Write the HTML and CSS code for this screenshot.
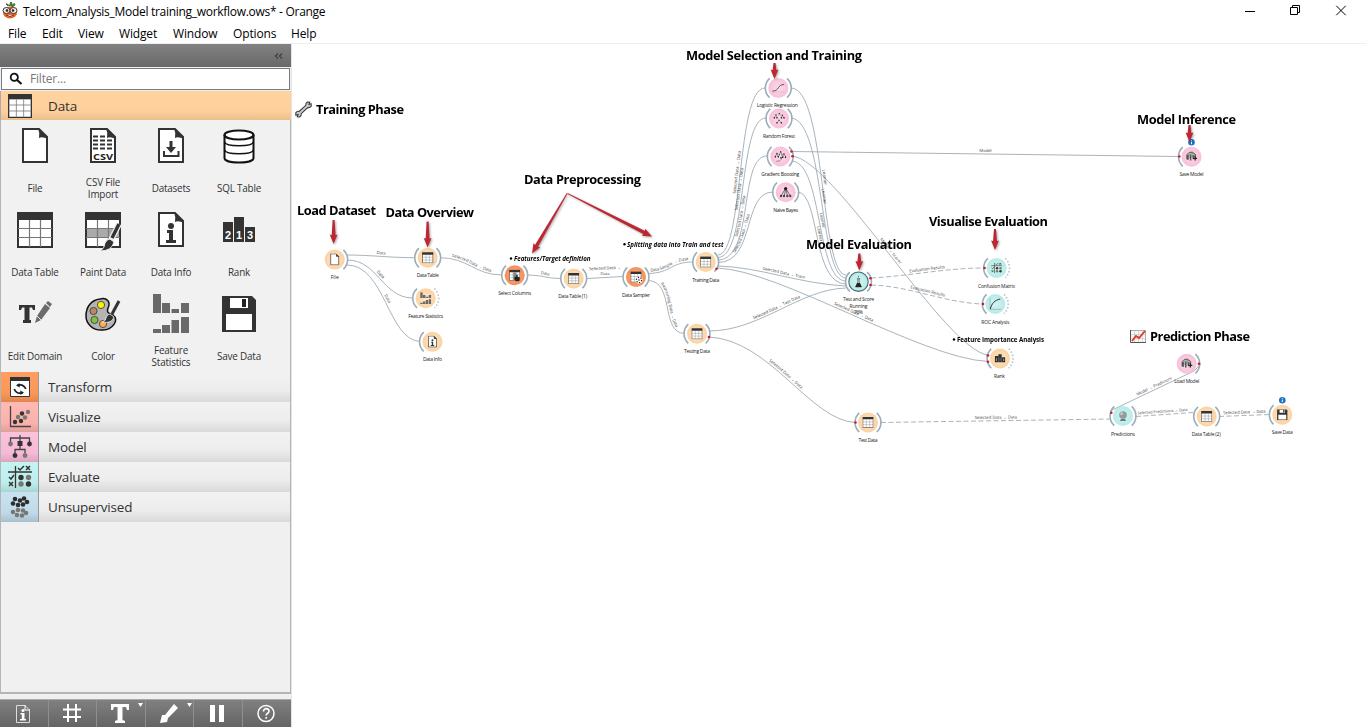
FILE: index.html
```html
<!DOCTYPE html>
<html lang="en">
<head>
<meta charset="utf-8">
<title>Telcom_Analysis_Model training_workflow.ows* - Orange</title>
<link rel="stylesheet" href="styles.css">
</head>
<body>
<svg class="defs" width="0" height="0">
  <defs>
    <symbol id="i-file" viewBox="0 0 36 36"><path d="M6 1H22L30 9V34H6Z" fill="#fff" stroke="#333" stroke-width="2"/><path d="M21 0L31 9V11Q25 8 22 10Q23 5 21 0Z" fill="#333"/></symbol>
    <symbol id="i-csv" viewBox="0 0 36 36"><use href="#i-file"/><path d="M8 8.500H20M8 12.500H27M8 16.500H27M8 20.500H27" stroke="#333" stroke-width="2" stroke-dasharray="5 2"/><text x="18" y="32" class="csv" textLength="20" lengthAdjust="spacingAndGlyphs">CSV</text></symbol>
    <symbol id="i-datasets" viewBox="0 0 36 36"><use href="#i-file"/><path d="M16.500 13H19.500V19H23L18 25L13 19H16.500Z" fill="#333"/><path d="M11 23V28H25.500V23" fill="none" stroke="#333" stroke-width="2"/></symbol>
    <symbol id="i-info" viewBox="0 0 36 36"><use href="#i-file"/><circle cx="18" cy="14" r="3" fill="#333"/><path d="M14 18H20V28H23V31H13V28H16V21H14Z" fill="#333"/></symbol>
    <symbol id="i-sql" viewBox="0 0 36 36"><path d="M3.500 7V30C3.500 36 32.500 36 32.500 30V7" fill="#fff" stroke="#111" stroke-width="2"/><ellipse cx="18" cy="7" rx="14.500" ry="4.500" fill="#fff" stroke="#111" stroke-width="2.200"/><path d="M3.500 14C5 19 31 19 32.500 14M3.500 22C5 27 31 27 32.500 22" fill="none" stroke="#111" stroke-width="1.500"/></symbol>
    <symbol id="i-table" viewBox="0 0 36 36"><path d="M1 1H35V35H1Z" fill="#fff" stroke="#333" stroke-width="2"/><path d="M0 0H36V8H0Z" fill="#333"/><path d="M12.500 8V35M23.500 8V35M1 16.500H35M1 25.500H35" stroke="#777" stroke-width="1.200"/></symbol>
    <symbol id="i-paint" viewBox="0 0 36 40"><path d="M1 1H35V35H1Z" fill="#fff" stroke="#333" stroke-width="2"/><path d="M0 0H36V8H0Z" fill="#333"/><path d="M2 17H34V25H2Z" fill="#aaa"/><path d="M12.500 8V35M23.500 8V35M1 16.500H35M1 25.500H35" stroke="#777" stroke-width="1.200"/><path d="M34 12L26 28" stroke="#f1f1f1" stroke-width="6"/><path d="M34 12L27 26" stroke="#333" stroke-width="3.500"/><path d="M25 27L29 30Q27 39 15 39Q20 36 20 31Q22 27 25 27Z" fill="#333" stroke="#f1f1f1" stroke-width="1"/></symbol>
    <symbol id="i-rank" viewBox="0 0 36 36"><path d="M2 10H12V30H2ZM13 5H23V30H13ZM24 15H34V30H24Z" fill="#333"/><text class="rank" x="7" y="27">2</text><text class="rank" x="18" y="27">1</text><text class="rank" x="29" y="27">3</text></symbol>
    <symbol id="i-bars" viewBox="0 0 36 36"><path d="M1 10H12V30H1ZM12.500 4H23.500V30H12.500ZM24 14H35V30H24Z" fill="#333"/><path d="M5 17H8V26H5ZM17 17H19V26H17ZM28 19H31V26H28Z" fill="#999"/></symbol>
    <symbol id="i-edit" viewBox="0 0 36 36"><path d="M2 9H18V14H16L15 11.500H12.500V24H14V27H6V24H7.500V11.500H5L4 14H2Z" fill="#333"/><path d="M18 27L20 20L28 8L33 12L24 24Z" fill="#6b6b6b"/><path d="M29 7L31 5L35 8L33 11Z" fill="#6b6b6b"/><path d="M20 20L24 24" stroke="#f1f1f1"/></symbol>
    <symbol id="i-color" viewBox="0 0 36 36"><path d="M15 3C22 1 26 6 23 12C21 17 25 18 28 19C35 24 27 34 18 34C7 35 1 27 1 20C1 11 6 4 15 3Z" fill="#b4b4b4" stroke="#111" stroke-width="1.500"/><g stroke="#333" stroke-width=".8"><circle cx="16" cy="9" r="3.600" fill="#ffef00"/><circle cx="8.500" cy="15" r="3.600" fill="#b98960"/><circle cx="9.500" cy="24" r="3.600" fill="#7fc241"/><circle cx="18" cy="28" r="3.600" fill="#ffae4f"/></g><path d="M34 5L27 18" stroke="#333" stroke-width="3"/><path d="M25 18L29 21Q27 28 17 26Q21 25 21 22Q22 18 25 18Z" fill="#333" stroke="#f1f1f1" stroke-width=".8"/></symbol>
    <symbol id="i-stats" viewBox="0 0 36 40"><path d="M0 0H8V19H0ZM9 9H17V19H9ZM18.500 15H26V19H18.500ZM28 9H36V19H28ZM0 35H8V39H0ZM9 31H17V39H9ZM18.500 26H26V39H18.500ZM28 23H36V39H28Z" fill="#696969"/></symbol>
    <symbol id="i-save" viewBox="0 0 36 36"><path d="M1 0H31L35 4V36H1Z" fill="#333"/><path d="M9 2H27V12H9ZM5 18H31V34H5Z" fill="#fff"/><path d="M21 3H25V11H21Z" fill="#222"/></symbol>
    <symbol id="i-transform" viewBox="0 0 20 20"><path d="M.5.500H19.500V19.500H.500Z" fill="#fff" stroke="#333"/><path d="M0 0H20V4H0Z" fill="#333"/><path d="M7.500 8.200Q13.500 6.500 15.800 12M12.500 15.800Q6.500 17.500 4.200 12" fill="none" stroke="#222" stroke-width="1.800"/><path d="M9.500 6L6 8.500L9.800 10.500ZM10.500 18L14 15.500L10.200 13.500Z" fill="#222"/></symbol>
    <symbol id="i-scatter" viewBox="0 0 22 22"><path d="M1.500 0V20.500H22" fill="none" stroke="#444" stroke-width="1.300"/><g fill="#333"><circle cx="6" cy="16" r="2.200"/><circle cx="12" cy="15" r="2.200"/><circle cx="13" cy="7.500" r="2.200"/></g><g fill="#777"><circle cx="9" cy="11" r="2.200"/><circle cx="16" cy="11.500" r="2.200"/><circle cx="19" cy="6" r="2.200"/></g></symbol>
    <symbol id="i-tree" viewBox="0 0 24 24"><path d="M2.500 7V3H21.500V7M12 0V15M7 18V14.500H17V18" fill="none" stroke="#444" stroke-width="1.300"/><path d="M9.500 6H14.500V11H9.500Z" fill="#333"/><circle cx="2.500" cy="9" r="2.400" fill="#777"/><circle cx="21.500" cy="9" r="2.400" fill="#333"/><circle cx="7" cy="20.500" r="2.400" fill="#333"/><circle cx="17" cy="20.500" r="2.400" fill="#777"/></symbol>
    <symbol id="i-eval" viewBox="0 0 24 24"><path d="M7.500 1V23M0 7H24" stroke="#333" stroke-width="1.300"/><path d="M10 3L12 5L16 1M18 1L22 5M22 1L18 5M1 12L3 14L6 10M1 17L5 21M5 17L1 21" fill="none" stroke="#333" stroke-width="1.500"/><g fill="#333"><circle cx="13" cy="12.500" r="2.700"/><circle cx="20.500" cy="19" r="2.700"/></g><g fill="#777"><circle cx="20.500" cy="12.500" r="2.700"/><circle cx="13" cy="19" r="2.700"/></g></symbol>
    <symbol id="i-unsup" viewBox="0 0 20 22"><g fill="#777"><circle cx="3" cy="16" r="2.300"/><circle cx="8" cy="14" r="2.300"/><circle cx="13" cy="14.500" r="2.300"/><circle cx="16" cy="17" r="2.300"/><circle cx="7" cy="19" r="2.300"/><circle cx="12" cy="19.500" r="2.300"/></g><g fill="#2d2d2d"><circle cx="5" cy="3" r="2.300"/><circle cx="10" cy="4.500" r="2.300"/><circle cx="14" cy="2.500" r="2.300"/><circle cx="3" cy="7.500" r="2.300"/><circle cx="8" cy="9" r="2.300"/><circle cx="13" cy="8.500" r="2.300"/><circle cx="17" cy="6" r="2.300"/></g></symbol>
    <symbol id="i-logistic" viewBox="0 0 36 26"><path d="M1 22C22 22 14 3 35 3" fill="none" stroke="#444" stroke-width="2.500"/><path d="M0 25H35" stroke="#999"/></symbol>
    <symbol id="i-forest" viewBox="0 0 36 36"><path d="M4 15L9 7L12 15M16 9L19 2L23 9M25 16L28 8L33 16M12 31L18 23L25 31" fill="none" stroke="#666" stroke-width="1.500"/><g fill="#222"><circle cx="4" cy="16" r="2.400"/><circle cx="12" cy="16" r="2.400"/><circle cx="9" cy="7" r="2"/><circle cx="19" cy="2.500" r="2"/><circle cx="25" cy="16" r="2.400"/><circle cx="33" cy="16" r="2.400"/><circle cx="28" cy="8" r="2"/><circle cx="12" cy="31" r="2.400"/><circle cx="25" cy="31" r="2.400"/><circle cx="18" cy="23" r="2"/></g></symbol>
    <symbol id="i-boost" viewBox="0 0 36 36"><path d="M3 18L8 9L12 18M15 12L19 3L23 12M25 19L29 10L34 19M6 32Q20 34 22 22" fill="none" stroke="#555" stroke-width="1.800"/><g fill="#222"><circle cx="3" cy="19" r="2.500"/><circle cx="12" cy="19" r="2.500"/><circle cx="8" cy="9" r="2"/><circle cx="19" cy="4" r="2"/><circle cx="15" cy="13" r="2"/><circle cx="23" cy="13" r="2"/><circle cx="25" cy="20" r="2.500"/><circle cx="34" cy="20" r="2.500"/><circle cx="29" cy="10" r="2"/><circle cx="20" cy="22" r="2.500"/></g></symbol>
    <symbol id="i-bayes" viewBox="0 0 36 36"><path d="M18 6L4 29M18 6L14 29M18 6L23 29M18 6L32 29" stroke="#333" stroke-width="2"/><circle cx="18" cy="7" r="5" fill="#222"/><g fill="#444"><circle cx="4" cy="29" r="3.500"/><circle cx="13" cy="29" r="3.500"/><circle cx="23" cy="29" r="3.500"/><circle cx="32" cy="29" r="3.500"/></g></symbol>
    <symbol id="i-flask" viewBox="0 0 36 36"><path d="M18 0V5" stroke="#333" stroke-width="2"/><path d="M13 9H23M16 9V19L9 34H27L20 19V9" fill="none" stroke="#444" stroke-width="2"/><path d="M14 22H22L27 34H9Z" fill="#222"/></symbol>
    <symbol id="i-roc" viewBox="0 0 36 36"><path d="M2 0V34H36" fill="none" stroke="#789" stroke-width="1.500"/><path d="M3 33C7 16 17 6 33 3" fill="none" stroke="#333" stroke-width="3"/></symbol>
    <symbol id="i-model" viewBox="0 0 36 36"><path d="M4 27V13L13 6H21L30 13V20" fill="#888" stroke="#333" stroke-width="2"/><path d="M4 14H10V29H4ZM13 15H18V31H13ZM21 15H25V27H21Z" fill="#555"/><path d="M5 13L14 10L28 14M11 14V29M19 15V30" fill="none" stroke="#e9e9e9" stroke-width="1.600"/><path d="M29 18V31M23 24.500H35" stroke="#222" stroke-width="4"/></symbol>
    <symbol id="i-ball" viewBox="0 0 36 36"><path d="M12 26H24L27 33H9Z" fill="#777"/><circle cx="18" cy="15" r="11.500" fill="#929a9b"/><circle cx="14" cy="11" r="5" fill="#bcc5c6"/></symbol>
    <path id="br" d="M8.700-9.600A13 13 0 0 1 8.700 9.600" class="bracket"/>
    <path id="bl" d="M-8.700-9.600A13 13 0 0 0-8.700 9.600" class="bracket"/>
    <path id="brd" d="M8.700-9.600A13 13 0 0 1 8.700 9.600" class="bracket dotted"/>
    <g id="info"><circle r="3.300" fill="#1b74c4"/><path d="M0-2V-1M0-.4V2" stroke="#fff" stroke-width="1"/></g>
    <path id="head" d="M-3.900-9.500L0 0L3.900-9.500L1.300-8.800H-1.300Z"/>
    <radialGradient id="g-data"><stop offset="0" stop-color="#fde7cd"/><stop offset="1" stop-color="#fbd2a1"/></radialGradient>
    <radialGradient id="g-trans"><stop offset="0" stop-color="#f9b48c"/><stop offset="1" stop-color="#f58d55"/></radialGradient>
    <radialGradient id="g-model"><stop offset="0" stop-color="#fcdce9"/><stop offset="1" stop-color="#f8bfd8"/></radialGradient>
    <radialGradient id="g-eval"><stop offset="0" stop-color="#d3f4f1"/><stop offset="1" stop-color="#b5ebe7"/></radialGradient>
  </defs>
</svg>

<header class="titlebar">
  <svg class="logo" viewBox="0 0 16 17"><path d="M8 4Q4 1 4 2L6 4M8 4Q8 0 9 0L10 1L9 4Q12 1 13 2Q13 4 10 5" fill="#3f8f3c" stroke="#39713a"/><ellipse cx="8" cy="10.500" rx="7" ry="6" fill="#e5652d"/><ellipse cx="4.500" cy="8.500" rx="3.500" ry="3" fill="#eee" stroke="#5a2d1f"/><ellipse cx="11.500" cy="8.500" rx="3.500" ry="3" fill="#eee" stroke="#5a2d1f"/><circle cx="5" cy="8.500" r="1.300" fill="#222"/><circle cx="11" cy="8.500" r="1.300" fill="#222"/><path d="M4 13Q8 16 12 13" fill="#fff" stroke="#802d17"/></svg>
  <span class="title">Telcom_Analysis_Model training_workflow.ows* - Orange</span>
  <svg class="controls" viewBox="0 0 120 24" fill="none" stroke="#000"><path d="M5 11.500H15"/><path d="M50.500 7.500H57.500V14.500H50.500ZM52.500 7.500V5.500H59.500V12.500H57.500"/><path d="M96.300 5.800L105.700 15.200M105.700 5.800L96.300 15.200"/></svg>
</header>
<nav class="menubar"><span class="m-file">File</span><span class="m-edit">Edit</span><span class="m-view">View</span><span class="m-widget">Widget</span><span class="m-window">Window</span><span class="m-options">Options</span><span>Help</span></nav>

<main class="body">
  <aside class="dock">
    <div class="dock-head"><svg width="9" height="8" viewBox="0 0 9 8" fill="none" stroke="#3c3c3c" stroke-width="1.200"><path d="M4 1.500L1.500 4L4 6.500M8 1.500L5.500 4L8 6.500"/></svg></div>
    <div class="filter"><svg width="14" height="14" viewBox="0 0 14 14" fill="none" stroke="#111"><circle cx="5.300" cy="5.300" r="3.600" stroke-width="1.800"/><path d="M8 8L12.500 12" stroke-width="2.200"/></svg><span>Filter...</span></div>
    <div class="tab-data"><svg width="24" height="24"><use href="#i-table"/></svg><span>Data</span></div>
    <div class="widgets">
      <div class="widget"><svg class="ico"><use href="#i-file"/></svg><p>File</p></div>
      <div class="widget"><svg class="ico"><use href="#i-csv"/></svg><p>CSV File<br>Import</p></div>
      <div class="widget"><svg class="ico"><use href="#i-datasets"/></svg><p>Datasets</p></div>
      <div class="widget"><svg class="ico"><use href="#i-sql"/></svg><p>SQL Table</p></div>
      <div class="widget"><svg class="ico"><use href="#i-table"/></svg><p>Data Table</p></div>
      <div class="widget"><svg class="ico tall"><use href="#i-paint"/></svg><p>Paint Data</p></div>
      <div class="widget"><svg class="ico"><use href="#i-info"/></svg><p>Data Info</p></div>
      <div class="widget"><svg class="ico"><use href="#i-rank"/></svg><p>Rank</p></div>
      <div class="widget"><svg class="ico"><use href="#i-edit"/></svg><p>Edit Domain</p></div>
      <div class="widget"><svg class="ico"><use href="#i-color"/></svg><p>Color</p></div>
      <div class="widget"><svg class="ico tall up"><use href="#i-stats"/></svg><p>Feature<br>Statistics</p></div>
      <div class="widget"><svg class="ico"><use href="#i-save"/></svg><p>Save Data</p></div>
    </div>
    <div class="tab"><i class="transform"><svg width="20" height="20"><use href="#i-transform"/></svg></i><span>Transform</span></div>
    <div class="tab"><i class="visualize"><svg width="22" height="22"><use href="#i-scatter"/></svg></i><span>Visualize</span></div>
    <div class="tab"><i class="model"><svg width="24" height="24"><use href="#i-tree"/></svg></i><span>Model</span></div>
    <div class="tab"><i class="evaluate"><svg width="24" height="24"><use href="#i-eval"/></svg></i><span>Evaluate</span></div>
    <div class="tab"><i class="unsup"><svg width="20" height="22"><use href="#i-unsup"/></svg></i><span>Unsupervised</span></div>
    <div class="space"></div>
    <div class="tools">
      <div><svg viewBox="0 0 48 27"><path d="M17.500 5.500H26L30.500 10V22.500H17.500Z" fill="none" stroke="#ddd"/><path d="M26 5V10H31" fill="none" stroke="#fff"/><circle cx="24" cy="10.500" r="1.600" fill="#fff"/><path d="M21.500 13H25.500V19H27V20.500H21V19H22.800V14.500H21.500Z" fill="#fff"/></svg></div>
      <div><svg viewBox="0 0 48 27"><path d="M20 4V22M28 4V22M15 9.500H33M15 17H33" stroke="#fff" stroke-width="2"/></svg></div>
      <div><svg viewBox="0 0 48 27"><path d="M15 4H33V10H31L30 7H26.500V20L29 21V23H19V21L21.500 20V7H18L17 10H15Z" fill="#fff"/><path d="M42 3H47L44.500 7Z" fill="#fff"/></svg></div>
      <div><svg viewBox="0 0 48 27"><path d="M29 4L33 8L23 18L22 22L15 23L17 15L20 15Z" fill="#fff"/><path d="M42 3H47L44.500 7Z" fill="#fff"/></svg></div>
      <div><svg viewBox="0 0 48 27"><path d="M17 5H22V22H17ZM26 5H31V22H26Z" fill="#fff"/></svg></div>
      <div><svg viewBox="0 0 48 27"><circle cx="24" cy="13.500" r="8" fill="none" stroke="#fff" stroke-width="1.500"/><path d="M21.500 11.500C21.500 7.500 27 8 27 11.200C27 13.500 24.200 13 24.200 15.500M24.200 17V18.800" fill="none" stroke="#fff" stroke-width="1.600"/></svg></div>
    </div>
  </aside>

  <svg class="canvas" viewBox="292 44 1074 683">
    <g class="links">
      <path id="l1" d="M347 255C370 255 390 257.700 415 257.700"/>
      <path id="l2" d="M347 260C378 260 382 297 412 298"/>
      <path id="l3" d="M347 265C385 265 388 340 420 341.500"/>
      <path id="l4" d="M440 257.700C468 257.700 475 275 502 275"/>
      <path id="l5" d="M528 275C545 275.500 545 278.300 561 278.500"/>
      <path id="l6" d="M587 278.500L623 276.500"/>
      <path id="l7" d="M648 273.500C672 273 670 262 693 262"/>
      <path id="l8" d="M648 280.500C675 281 660 333.500 685 333.500"/>
      <path id="l9" d="M718 255C744 254 736 88 765 88"/>
      <path id="l10" d="M718 257.500C748 257 738 118 766 118"/>
      <path id="l11" d="M718 260C755 259 738 156 767 156"/>
      <path id="l12" d="M718 262.500C756 262 742 192 773 192"/>
      <path id="l13" d="M791 88C826 88 820 275 846 275"/>
      <path id="l14" d="M791 118C825 120 819 278 846 278"/>
      <path id="l15" d="M792 161C823 163 816 281 846 281"/>
      <path id="l16" d="M798 192C820 194 812 284 846 284"/>
      <path id="l17" d="M792 151.500L1179 156.500"/>
      <path id="l18" d="M792 156C835 160 945 350 988 355"/>
      <path id="l19" d="M718 266C760 267 800 284 846 286"/>
      <path id="l20" d="M717 268C780 270 920 358 988 361.500"/>
      <path id="l21" d="M709 331C760 331 800 289 846 288"/>
      <path id="l22" d="M709 337C770 340 810 420 855 422.500"/>
      <path id="l23" class="dash" d="M871 278C910 276 945 268 984 268"/>
      <path id="l24" class="dash" d="M871 285C910 286 945 303 983 304"/>
      <path id="l25" class="dash" d="M881 422.500L1111 419"/>
      <path id="l26" d="M1110 411L1194 371L1201 364"/>
      <path id="l27" class="dash" d="M1136 416.500L1193 412.500"/>
      <path id="l28" class="dash" d="M1219 416.500L1270 414.500"/>
    </g>
    <g class="linktext">
      <text dy="-2"><textPath href="#l1" startOffset="50%">Data</textPath></text>
      <text dy="-2"><textPath href="#l2" startOffset="47%">Data</textPath></text>
      <text dy="-2"><textPath href="#l3" startOffset="49%">Data</textPath></text>
      <text dy="-2"><textPath href="#l4" startOffset="50%">Selected Data → Data</textPath></text>
      <text dy="-2"><textPath href="#l5" startOffset="50%">Data</textPath></text>
      <text x="605" y="269.500" transform="rotate(-3 605 269)">Selected Data →</text><text x="605" y="274.500">Data</text>
      <text dy="-2"><textPath href="#l7" startOffset="48%">Data Sample → Data</textPath></text>
      <text dy="-2"><textPath href="#l8" startOffset="50%">Remaining Data → Data</textPath></text>
      <text dy="-2"><textPath href="#l9" startOffset="49%">Selected Data → Data</textPath></text>
      <text dy="-2"><textPath href="#l10" startOffset="49%">Selected Data → Data</textPath></text>
      <text dy="-2"><textPath href="#l11" startOffset="44%">Selected Data → Data</textPath></text>
      <text dy="-2"><textPath href="#l12" startOffset="43%">Selected Data → Data</textPath></text>
      <text dy="-2"><textPath href="#l13" startOffset="49%">Learner</textPath></text>
      <text dy="-2"><textPath href="#l14" startOffset="50%">Learner</textPath></text>
      <text dy="-2"><textPath href="#l15" startOffset="50%">Learner</textPath></text>
      <text dy="-2"><textPath href="#l16" startOffset="44%">Learner</textPath></text>
      <text dy="-2"><textPath href="#l17" startOffset="50%">Model</textPath></text>
      <text dy="-2"><textPath href="#l18" startOffset="49%">Model → Scorer</textPath></text>
      <text dy="-2"><textPath href="#l19" startOffset="51%">Selected Data → Train</textPath></text>
      <text dy="-2"><textPath href="#l20" startOffset="50%">Selected Data → Data</textPath></text>
      <text dy="-2"><textPath href="#l21" startOffset="50%">Selected Data → Test Data</textPath></text>
      <text dy="-2"><textPath href="#l22" startOffset="50%">Selected Data → Data</textPath></text>
      <text dy="-2"><textPath href="#l23" startOffset="50%">Evaluation Results</textPath></text>
      <text dy="-2"><textPath href="#l24" startOffset="50%">Evaluation Results</textPath></text>
      <text dy="-2"><textPath href="#l25" startOffset="50%">Selected Data → Data</textPath></text>
      <text dy="-2"><textPath href="#l26" startOffset="49%">Model → Predictors</textPath></text>
      <text dy="-2" class="tight"><textPath href="#l27" startOffset="47%">Selected Predictions → Data</textPath></text>
      <text dy="-2"><textPath href="#l28" startOffset="50%">Selected Data → Data</textPath></text>
    </g>

    <g class="nodes">
      <g transform="translate(334.700 259.500)"><circle r="10" fill="url(#g-data)"/><use href="#br"/><use href="#i-file" x="-6" y="-6" width="12" height="12"/><text y="19.500" textLength="8">File</text></g>
      <g transform="translate(427.700 257.700)"><circle r="10" fill="url(#g-data)"/><use href="#bl"/><use href="#br"/><use href="#i-table" x="-6" y="-5.500" width="12" height="11"/><text y="19.500" textLength="22">Data Table</text></g>
      <g transform="translate(425.700 298.300)"><circle r="10" fill="url(#g-data)"/><use href="#bl"/><use href="#brd"/><use href="#i-stats" x="-6" y="-6" width="12" height="12"/><text y="19.500" textLength="35">Feature Statistics</text></g>
      <g transform="translate(432.500 341.700)"><circle r="10" fill="url(#g-data)"/><use href="#bl"/><use href="#i-info" x="-6" y="-6" width="12" height="12"/><text y="19.500" textLength="19">Data Info</text></g>
      <g transform="translate(514.700 275.300)"><circle r="10" fill="url(#g-trans)"/><use href="#bl"/><use href="#br"/><use href="#i-table" x="-5.500" y="-5.500" width="11" height="11"/><path d="M-1.500-3H1.500V5H-1.500Z" fill="#888"/><path d="M0 1.500H1.500V-.5H3V1.500L5 2V4.500L4 6H1L-.5 3.500Z" fill="#222"/><text y="19.500" textLength="33">Select Columns</text></g>
      <g transform="translate(573.700 278.500)"><circle r="10" fill="url(#g-data)"/><use href="#bl"/><use href="#br"/><use href="#i-table" x="-5.500" y="-5.500" width="11" height="11"/><text y="19.500" x="-1" textLength="29">Data Table (1)</text></g>
      <g transform="translate(636 277)"><circle r="10" fill="url(#g-trans)"/><use href="#bl"/><use href="#br"/><use href="#i-table" x="-5.500" y="-5.500" width="11" height="11"/><circle cx="3" cy="3" r="3.600" fill="#fff"/><circle cx="3" cy="3" r="2.600" fill="none" stroke="#222" stroke-width="1.200" stroke-dasharray="1.200 1.500"/><circle cx="3" cy="3" r=".7"/><text y="19.500" textLength="28">Data Sampler</text></g>
      <g transform="translate(705.700 262)"><circle r="10" fill="url(#g-data)"/><use href="#bl"/><use href="#br"/><use href="#i-table" x="-5.500" y="-5.500" width="11" height="11"/><text y="20" textLength="27">Training Data</text></g>
      <g transform="translate(697 333.800)"><circle r="10" fill="url(#g-data)"/><use href="#bl"/><use href="#br"/><use href="#i-table" x="-5.500" y="-5.500" width="11" height="11"/><text y="19.500" textLength="26">Testing Data</text></g>
      <g transform="translate(778.300 88)"><circle r="10" fill="url(#g-model)"/><use href="#bl"/><use href="#br"/><use href="#i-logistic" x="-6.500" y="-4.500" width="13" height="9"/><text y="19" x="-1" textLength="41">Logistic Regression</text></g>
      <g transform="translate(779 118.500)"><circle r="10" fill="url(#g-model)"/><use href="#bl"/><use href="#br"/><use href="#i-forest" x="-6" y="-6" width="12" height="12"/><text y="19.500" textLength="32">Random Forest</text></g>
      <g transform="translate(780.300 156.500)"><circle r="10" fill="url(#g-model)"/><use href="#bl"/><use href="#br"/><use href="#i-boost" x="-6" y="-6" width="12" height="12"/><text y="19.500" textLength="38">Gradient Boosting</text></g>
      <g transform="translate(785.700 192.300)"><circle r="10" fill="url(#g-model)"/><use href="#bl"/><use href="#br"/><use href="#i-bayes" x="-6" y="-6" width="12" height="12"/><text y="19.500" textLength="25">Naive Bayes</text></g>
      <g transform="translate(858.500 281.700)"><circle r="9.700" fill="url(#g-eval)" stroke="#4b6770" stroke-width="1.100"/><use href="#bl"/><use href="#br"/><use href="#i-flask" x="-6" y="-6" width="12" height="12"/><text y="19.500" textLength="31">Test and Score</text><text y="26" textLength="18">Running</text><text y="32" textLength="9">76%</text></g>
      <g transform="translate(868 422.400)"><circle r="10" fill="url(#g-data)"/><use href="#bl"/><use href="#br"/><use href="#i-table" x="-5.500" y="-5.500" width="11" height="11"/><text y="19.500" textLength="19">Test Data</text></g>
      <g transform="translate(996.600 268)"><circle r="10" fill="url(#g-eval)"/><use href="#bl"/><use href="#brd"/><use href="#i-eval" x="-5.500" y="-5.500" width="11" height="11"/><text y="20" textLength="37">Confusion Matrix</text></g>
      <g transform="translate(995.300 304)"><circle r="10" fill="url(#g-eval)"/><use href="#bl"/><use href="#brd"/><use href="#i-roc" x="-6" y="-6" width="12" height="12"/><text y="20" textLength="28">ROC Analysis</text></g>
      <g transform="translate(1000 358.500)"><circle r="10" fill="url(#g-data)"/><use href="#bl"/><use href="#brd"/><use href="#i-bars" x="-5.500" y="-5.500" width="11" height="11"/><text y="19.500" x="-.5" textLength="11">Rank</text></g>
      <g transform="translate(1186.700 363.700)"><circle r="10" fill="url(#g-model)"/><use href="#br"/><use href="#i-model" x="-6" y="-6.500" width="12" height="12"/><text y="19" textLength="25">Load Model</text></g>
      <g transform="translate(1123 416)"><circle r="10" fill="url(#g-eval)"/><use href="#bl"/><use href="#br"/><use href="#i-ball" x="-6" y="-6" width="12" height="12"/><text y="20" textLength="24">Predictions</text></g>
      <g transform="translate(1206.700 416.500)"><circle r="10" fill="url(#g-data)"/><use href="#bl"/><use href="#br"/><use href="#i-table" x="-5.500" y="-5.500" width="11" height="11"/><text y="19.500" x="-.5" textLength="29">Data Table (2)</text></g>
      <g transform="translate(1282.300 414.700)"><circle r="10" fill="url(#g-data)"/><use href="#bl"/><use href="#i-save" x="-5.500" y="-5.500" width="11" height="11"/><use href="#info" y="-14.500"/><text y="19.500" textLength="21">Save Data</text></g>
      <g transform="translate(1191.500 156.700)"><circle r="10" fill="url(#g-model)"/><use href="#bl"/><use href="#i-model" x="-6" y="-6.500" width="12" height="12"/><use href="#info" y="-14.500"/><text y="19" textLength="24">Save Model</text></g>
    </g>

    <g fill="#d6152b">
      <circle cx="716.500" cy="268.700" r="1.300"/><circle cx="709" cy="337" r="1.300"/><circle cx="791.500" cy="151.500" r="1.300"/><circle cx="792.500" cy="156.300" r="1.300"/><circle cx="870.500" cy="278.300" r="1.300"/><circle cx="870.500" cy="285" r="1.300"/><circle cx="855.500" cy="422.500" r="1.300"/><circle cx="984.500" cy="268" r="1.300"/><circle cx="983" cy="304" r="1.300"/><circle cx="988" cy="355.500" r="1.300"/><circle cx="988" cy="361.700" r="1.300"/><circle cx="1111.300" cy="412.700" r="1.300"/><circle cx="1199" cy="363.700" r="1.300"/><circle cx="1179.300" cy="156.500" r="1.300"/>
    </g>

    <g class="arrows">
      <g transform="translate(333.600 244)"><use href="#head"/><path d="M-1-24H1L2-8H-2Z"/></g>
      <g transform="translate(427.600 247.500)"><use href="#head"/><path d="M-1-26H1L2-8H-2Z"/></g>
      <g transform="translate(774.500 79)"><use href="#head"/><path d="M-1-16H1L2-8H-2Z"/></g>
      <g transform="translate(859.300 270.500)"><use href="#head"/><path d="M-1-17H1L2-8H-2Z"/></g>
      <g transform="translate(995 250)"><use href="#head"/><path d="M-1-21H1L2-8H-2Z"/></g>
      <g transform="translate(1189.500 142)"><use href="#head"/><path d="M-1-17H1L2-8H-2Z"/></g>
      <g transform="translate(532 253.500) rotate(30.300)"><use href="#head"/><path d="M-.5-69.500H.5L1.800-8H-1.800Z"/></g>
      <g transform="translate(652 236.500) rotate(-63)"><use href="#head"/><path d="M-.5-95H.5L1.800-8H-1.800Z"/></g>
    </g>

    <g class="notes">
      <text x="316" y="114" textLength="88">Training Phase</text>
      <text x="297" y="215" textLength="79">Load Dataset</text>
      <text x="385.500" y="217" textLength="88.500">Data Overview</text>
      <text x="524" y="184" textLength="117">Data Preprocessing</text>
      <text x="686" y="60" textLength="176">Model Selection and Training</text>
      <text x="806" y="249" textLength="106">Model Evaluation</text>
      <text x="929" y="226" textLength="119">Visualise Evaluation</text>
      <text x="1137" y="124" textLength="99">Model Inference</text>
      <text x="1150" y="341" textLength="100">Prediction Phase</text>
    </g>
    <g class="subnotes">
      <circle cx="511" cy="258.500" r="1.200"/><text class="it" x="514" y="261" textLength="76.500">Features/Target definition</text>
      <circle cx="624.500" cy="244.300" r="1.200"/><text class="it" x="627" y="247" textLength="96.500">Splitting data into Train and test</text>
      <circle cx="954" cy="339.500" r="1.200"/><text x="957" y="342" textLength="87">Feature Importance Analysis</text>
    </g>
    <!-- wrench -->
    <g transform="translate(303.500 109.500) rotate(-43)"><path d="M-9.500-1L-8-2.800Q-5.500-3.200-4.500-1.500H4.500Q5.500-3.200 8-2.800L9.500-1L7.500 0L9.500 1L8 2.800Q5.500 3.200 4.500 1.500H-4.500Q-5.500 3.200-8 2.800L-9.500 1L-7.500 0Z" fill="#c3c9ce" stroke="#333" stroke-width="1"/></g>
    <!-- chart -->
    <g><path d="M1130.500 330.500H1145.500V342.500H1130.500Z" fill="#f7f7f7" stroke="#aaa"/><path d="M1134.500 330V343M1138.500 330V343M1142.500 330V343M1130 334.500H1146M1130 338.500H1146" stroke="#ccc" stroke-width=".7"/><path d="M1130.500 330V342.500H1146" fill="none" stroke="#555"/><path d="M1132 341L1136 336L1139 338L1145 331" fill="none" stroke="#e33527" stroke-width="1.800"/></g>
  </svg>
</main>
</body>
</html>
```

FILE: styles.css
```css
* { box-sizing: border-box; }
body { margin: 0; width: 1366px; height: 727px; overflow: hidden; display: flex; flex-direction: column; background: #fff; color: #000; font-family: "Open Sans", "Noto Sans", sans-serif; font-size: 12px; }
svg { display: block; flex: none; }
.defs { width: 0; height: 0; }
.csv { font: 700 9.5px "Open Sans", sans-serif; text-anchor: middle; fill: #222; }
.rank { font: 700 11px "Liberation Sans", sans-serif; text-anchor: middle; fill: #fff; }

.titlebar { height: 24px; display: flex; align-items: center; padding-left: 2px; flex: none; }
.logo { width: 16px; height: 17px; margin-right: 5px; margin-bottom: 3px; }
.title { flex: 1; letter-spacing: -0.29px; line-height: 24px; white-space: nowrap; }
.controls { width: 120px; height: 24px; margin-right: 6px; }
.menubar { height: 20px; display: flex; padding-left: 8px; line-height: 19px; letter-spacing: -0.15px; border-bottom: 1px solid #eee; flex: none; }
.m-file { width: 34px; }
.m-edit { width: 36px; }
.m-view { width: 41px; }
.m-widget { width: 54px; }
.m-window { width: 60px; }
.m-options { width: 58px; }

.body { flex: 1; display: flex; }
.dock { width: 292px; display: flex; flex-direction: column; background: #f0f0f0; border-right: 1px solid #e4e4e4; flex: none; }
.dock-head { height: 23px; width: 291px; background: linear-gradient(#828282, #686868); display: flex; justify-content: flex-end; align-items: center; padding-right: 8px; padding-top: 1px; }
.filter { height: 22px; margin: 1px 1px 0; background: #fff; border: 1px solid #747b85; display: flex; align-items: center; padding-left: 7px; color: #7a7a7a; gap: 7px; letter-spacing: -0.2px; }
.filter span { line-height: 18px; }
.tab-data { height: 29px; margin: 1px 0 0; border-left: 1px solid #aab; background: linear-gradient(#ffd39f, #fdd09b 70%, #ebc08d); display: flex; align-items: center; padding-left: 7px; gap: 16px; color: #333; font-size: 13.5px; }
.tab-data span { letter-spacing: -0.1px; }
.widgets { height: 253px; margin-bottom: -1px; padding: 8px 0 0; border-left: 1px solid #b3b6b8; border-right: 1px solid #b3b6b8; border-bottom: 1px solid #999; display: grid; grid-template-columns: repeat(4, 68px); grid-auto-rows: 84px; background: #f1f1f1; width: 291px; }
.widget { display: flex; flex-direction: column; align-items: center; height: 80px; }
.ico { width: 36px; height: 36px; }
.ico.tall { height: 40px; margin-bottom: -4px; }
.ico.up { margin-top: -2px; margin-bottom: -2px; }
.widget p { margin: 6px 0 0; width: 66px; height: 36px; display: flex; align-items: center; justify-content: center; text-align: center; font-size: 9.9px; line-height: 12px; color: #333; letter-spacing: -0.18px; }
.tab { height: 30px; width: 291px; border: 0 solid #b3b6b8; border-width: 0 1px; display: flex; align-items: center; background: linear-gradient(#f2f2f2, #ededed 60%, #d9d9d9); font-size: 13.5px; color: #333; flex: none; }
.tab i { width: 38px; height: 30px; border-right: 1px solid #999; display: flex; align-items: center; justify-content: center; margin-right: 9px; }
.tab span { letter-spacing: -0.2px; }
.transform { background: linear-gradient(#ff9e60, #fa9859 70%, #df874f); }
.visualize { background: linear-gradient(#ffb9b4, #fbb1ac 70%, #df9f9b); }
.model { background: linear-gradient(#fcc1dc, #f7bad6 70%, #dba5be); }
.evaluate { background: linear-gradient(#c4f4f2, #bceeeb 70%, #a8d5d2); }
.unsup { background: linear-gradient(#cbe3f1, #c0d9e8 70%, #a9bfcc); }
.space { flex: 1; width: 291px; border: 1px solid #b3b6b8; border-top: 0; border-bottom: 2px solid #b5b5b5; margin-bottom: 5px; }
.tools { height: 28px; width: 291px; border-top: 1px solid #aaa; display: grid; grid-template-columns: repeat(6, 1fr); background: linear-gradient(#808080, #646464); flex: none; }
.tools div { border-right: 1px solid #8f8f8f; display: flex; justify-content: center; }
.tools div:last-child { border-right: 0; }
.tools svg { width: 48px; height: 27px; margin-left: -1px; }

.canvas { width: 1074px; height: 683px; background: #fff; }
.links path { fill: none; stroke: #9eacb6; stroke-width: 0.9; }
.links .dash { stroke-dasharray: 5 2.5; }
.linktext text { font-size: 4.2px; text-anchor: middle; fill: #444; }
.linktext .tight { font-size: 3.8px; }
.bracket { fill: none; stroke: #9badb9; stroke-width: 1.6; }
.bracket.dotted { stroke: #b9c4cc; stroke-dasharray: 1.6 1.8; }
.nodes text { font-size: 5px; text-anchor: middle; fill: #222; }
.arrows { fill: #bd2732; filter: drop-shadow(1px 1px 1px rgba(0, 0, 0, 0.35)); }
.notes text { font-size: 12.8px; font-weight: 700; }
.subnotes text { font-size: 6.2px; font-weight: 700; }
.subnotes .it { font-style: italic; }
```
